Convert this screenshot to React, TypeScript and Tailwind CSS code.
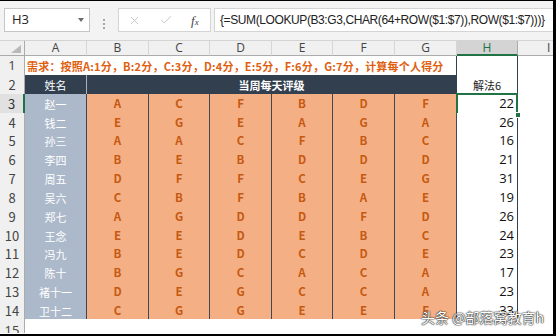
import { X, Check } from "lucide-react";

const cols = "grid grid-cols-[25px_62px_62px_61px_62px_61px_62px_62px_61px_1fr]";

const people: [string, string, number, boolean][] = [
  ["赵一", "ACFBDF", 22, true],
  ["钱二", "EGEAGA", 26, false],
  ["孙三", "AACFBC", 16, true],
  ["李四", "BEBDDD", 21, true],
  ["周五", "DFFCEG", 31, true],
  ["吴六", "CBFBAE", 19, true],
  ["郑七", "AGDDFD", 26, true],
  ["王念", "EEDEBC", 24, false],
  ["冯九", "BEDCDE", 23, true],
  ["陈十", "BGCACA", 17, true],
  ["褚十一", "DEGCCA", 23, true],
  ["卫十二", "CGGEEF", 33, false],
];

function RowHead({ n, active }: { n: number; active?: boolean }) {
  return (
    <div
      className={
        active
          ? "flex items-center justify-center bg-[#e1e1e1] border-b border-b-[#d6d6d6] border-r-2 border-r-[#217346] text-[13px] text-[#333]"
          : "flex items-center justify-center bg-[#f0f0f0] border-b border-b-[#d6d6d6] border-r border-r-[#ababab] text-[13px] text-[#444]"
      }
    >
      {n}
    </div>
  );
}

export default function App() {
  return (
    <div className="relative w-[556px] h-[336px] overflow-hidden bg-white border-t border-r-[3px] border-b-2 border-black font-['Open_Sans','Noto_Sans_CJK_SC',sans-serif]">
      {/* formula bar */}
      <div className="flex h-[40px] bg-[#f3f3f3] border-b border-[#d4d4d4] pt-[7px]">
        <div className="ml-[4px] w-[86px] h-[24px] bg-white border border-[#c6c6c6] flex items-center justify-between pl-[7px] pr-[5px]">
          <span className="text-[13px] text-[#222]">H3</span>
          <span className="w-0 h-0 border-l-[3px] border-r-[3px] border-t-[4px] border-l-transparent border-r-transparent border-t-[#6b6b6b]" />
        </div>
        <div className="w-[28px] flex flex-col items-center justify-center gap-[2px]">
          <span className="w-[2px] h-[2px] bg-[#a8a8a8]" />
          <span className="w-[2px] h-[2px] bg-[#a8a8a8]" />
          <span className="w-[2px] h-[2px] bg-[#a8a8a8]" />
        </div>
        <div className="w-[93px] h-[24px] bg-white border border-[#d4d4d4] flex items-center pl-[9px] gap-[18px]">
          <X size={13} strokeWidth={1.5} className="text-[#bdbdbd]" />
          <Check size={14} strokeWidth={1.5} className="text-[#bdbdbd]" />
          <span className="font-['Liberation_Serif',serif] italic text-[13px] text-[#444] leading-none">
            f<span className="text-[9px]">x</span>
          </span>
        </div>
        <div className="ml-[3px] flex-1 h-[24px] bg-white border border-r-0 border-[#d4d4d4] flex items-center pl-[5px] font-['Liberation_Sans',sans-serif] text-[12px] tracking-[-0.4px] text-[#222] whitespace-nowrap overflow-hidden">
          {"{=SUM(LOOKUP(B3:G3,CHAR(64+ROW($1:$7)),ROW($1:$7)))}"}
        </div>
      </div>

      {/* column headers */}
      <div className={`${cols} h-[15px] text-[12px] text-[#444]`}>
        <div className="relative bg-[#f0f0f0] border-r border-b border-[#ababab]">
          <span className="absolute right-[3px] bottom-[2px] w-0 h-0 border-l-[10px] border-t-[8px] border-l-transparent border-t-transparent border-b-0 border-r-0 [border-bottom:8px_solid_#b9b9b9]" />
        </div>
        {["A", "B", "C", "D", "E", "F", "G"].map((c) => (
          <div key={c} className="flex items-center justify-center bg-[#f0f0f0] border-r border-r-[#d6d6d6] border-b border-b-[#ababab] leading-none">
            {c}
          </div>
        ))}
        <div className="flex items-center justify-center bg-[#d4d4d4] border-r border-r-[#ababab] border-b-2 border-b-[#217346] text-[#217346] leading-none">
          H
        </div>
        <div className="flex items-center pl-[29px] bg-[#f0f0f0] border-b border-b-[#ababab] leading-none">I</div>
      </div>

      {/* row 1 */}
      <div className={`${cols} h-[19px]`}>
        <RowHead n={1} />
        <div className="col-span-7 flex items-center pl-[2px] bg-white border-r border-r-[#323f4f] border-b border-b-[#d4d4d4] font-['Noto_Sans_CJK_SC',sans-serif] font-bold text-[11px] tracking-[0.2px] text-[#e0600f] whitespace-nowrap">
          需求：按照A:1分，B:2分，C:3分，D:4分，E:5分，F:6分，G:7分，计算每个人得分
        </div>
        <div className="bg-white border-r border-b border-[#323f4f]" />
        <div className="bg-white border-b border-[#e3e3e3]" />
      </div>

      {/* row 2 */}
      <div className={`${cols} h-[19px] font-['Noto_Sans_CJK_SC',sans-serif] text-[11px]`}>
        <RowHead n={2} />
        <div className="flex items-center justify-center bg-[#323f4f] border-r border-r-[#a9b1bc] border-b border-b-[#323f4f] text-white">
          姓名
        </div>
        <div className="col-span-6 flex items-center justify-center bg-[#323f4f] border-r border-b border-[#323f4f] text-white font-bold">
          当周每天评级
        </div>
        <div className="flex items-center justify-center bg-white border-r border-b border-[#323f4f] text-[#222]">
          解法6
        </div>
        <div className="bg-white border-b border-[#e3e3e3]" />
      </div>

      {/* data rows */}
      {people.map(([name, grades, score, tall], i) => (
        <div key={name} className={`${cols} ${tall ? "h-[19px]" : "h-[18px]"} font-['Noto_Sans_CJK_SC',sans-serif]`}>
          <RowHead n={i + 3} active={i === 0} />
          <div className="flex items-center justify-center bg-[#acb9ca] border-r border-b border-[#3b4656] text-white text-[11px]">
            {name}
          </div>
          {grades.split("").map((g, j) => (
            <div key={j} className="flex items-center justify-center bg-[#f4b084] border-r border-b border-[#3e4856] text-[#c65911] font-bold text-[11.5px]">
              {g}
            </div>
          ))}
          <div className="relative flex items-center justify-end pr-[3px] bg-white border-r border-r-[#323f4f] border-b border-b-[#c9c9c9] font-['Open_Sans',sans-serif] text-[13px] text-[#111]">
            {score}
            {i === 0 && (
              <>
                <span className="absolute -left-[1px] -top-[1px] -right-[1px] -bottom-[1px] border-2 border-[#217346]" />
                <span className="absolute -right-[4px] -bottom-[4px] w-[6px] h-[6px] bg-[#217346] border border-white z-10" />
              </>
            )}
          </div>
          <div className="bg-white border-b border-[#e3e3e3]" />
        </div>
      ))}

      {/* row 15 */}
      <div className={`${cols} h-[14px] overflow-hidden`}>
        <div className="h-[19px] flex items-center justify-center bg-[#f0f0f0] border-r border-r-[#ababab] text-[13px] text-[#444] pt-[4px]">
          15
        </div>
        <div className="col-span-9 bg-white" />
      </div>

      {/* watermark */}
      <div className="absolute left-[421px] top-[306px] z-20 whitespace-nowrap font-['Noto_Sans_CJK_SC',sans-serif] text-[14px] text-white [text-shadow:0_0_1px_#222,0_0_1px_#222,0_0_2px_#444]">
        头条 @部落窝教育h
      </div>
    </div>
  );
}
